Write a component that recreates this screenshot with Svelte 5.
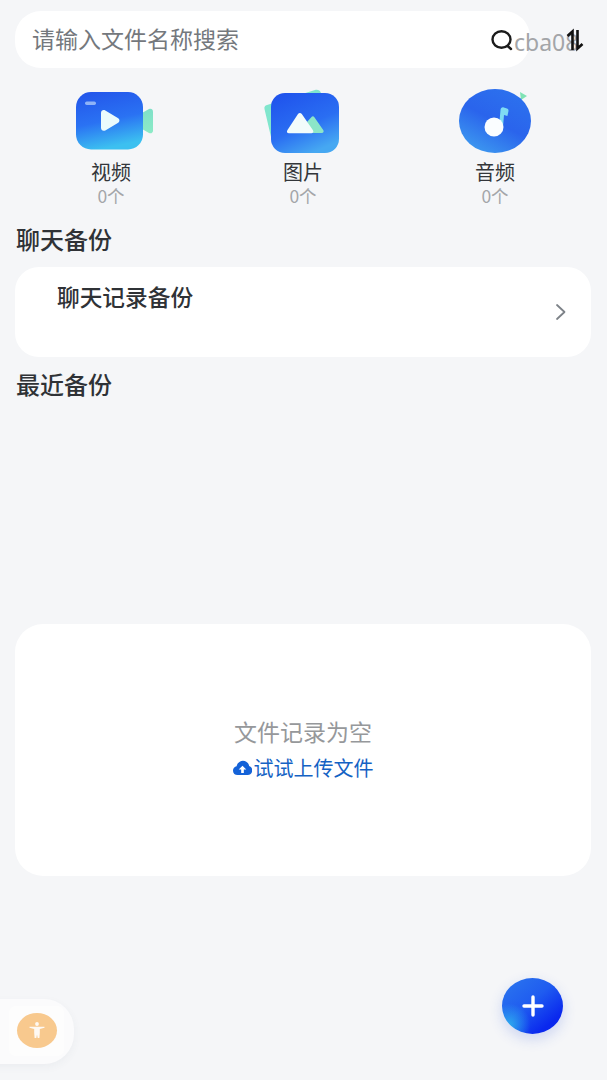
<script>
	const categories = [
		{ key: 'video', label: '视频' },
		{ key: 'image', label: '图片' },
		{ key: 'audio', label: '音频' }
	];
</script>

<div class="page">
	<div class="search-row">
		<div class="search">
			<span class="placeholder">请输入文件名称搜索</span>
		</div>
		<span class="user">cba08</span>
		<svg class="search-icon" width="24" height="24" viewBox="0 0 24 24" fill="none" stroke="#1b1b1b" stroke-width="2.4" stroke-linecap="round">
			<ellipse cx="11.5" cy="10.500" rx="9" ry="8.300" />
			<path d="M17.600 17l3.400 3" />
		</svg>
		<svg class="sort-icon" width="22" height="24" viewBox="0 0 22 24" fill="none" stroke="#111" stroke-width="2.600">
			<path d="M8.500 22V3.500L3.500 8" />
			<path d="M13.500 2v18.500l5-4.500" />
		</svg>
	</div>

	<div class="categories">
		{#each categories as c}
			<div class="category">
				<div class="cat-icon">
					{#if c.key === 'video'}
						<svg width="84" height="68" viewBox="0 0 84 68">
							<defs>
								<linearGradient id="vb" x1="0.1" y1="0" x2="0.35" y2="1">
									<stop offset="0" stop-color="#2355ea" />
									<stop offset="0.55" stop-color="#2a72f3" />
									<stop offset="1" stop-color="#3cc0f0" />
								</linearGradient>
								<linearGradient id="vt" x1="0" y1="0" x2="0" y2="1">
									<stop offset="0" stop-color="#7fe0c8" />
									<stop offset="1" stop-color="#8cebc6" />
								</linearGradient>
							</defs>
							<path d="M73 24l7-4c2-1 4 .2 4 2.500v19c0 2.300-2 3.500-4 2.500l-7-4z" fill="url(#vt)" />
							<rect x="7" y="3" width="67" height="57.500" rx="15" fill="url(#vb)" />
							<rect x="16" y="12.500" width="11" height="3.500" rx="1.700" fill="#8fb3f7" />
							<path d="M32 24c0-2.500 2.200-3.800 4.300-2.600l12.500 7.500c2.200 1.200 2.200 3.800 0 5l-12.500 7.500c-2.100 1.200-4.300-.1-4.300-2.600z" fill="#eafbfc" />
						</svg>
					{:else if c.key === 'image'}
						<svg width="80" height="68" viewBox="0 0 80 68">
							<defs>
								<linearGradient id="ib" x1="0.1" y1="0" x2="0.6" y2="1">
									<stop offset="0" stop-color="#1f52ec" />
									<stop offset="0.6" stop-color="#2a6ef2" />
									<stop offset="1" stop-color="#46a8f2" />
								</linearGradient>
							</defs>
							<path d="M8 48L1.500 20c-.5-2 .5-3.500 2.500-4L52 1c3-.7 5 .5 6 3l4 6H12z" fill="#80e6cd" />
							<rect x="8" y="4" width="68" height="60" rx="14" fill="url(#ib)" />
							<path d="M44 33l4.500-5c.8-.9 2-.9 2.700 0l9 13c1 1.500.3 3-1.500 3H50z" fill="#8ce6c8" />
							<path d="M35 25c1-1.500 2.800-1.500 3.800 0l11 16c1.200 1.700.5 3.300-1.500 3.300H26c-2 0-2.700-1.600-1.500-3.300z" fill="#f2fcfb" />
						</svg>
					{:else}
						<svg width="80" height="68" viewBox="0 0 80 68">
							<defs>
								<linearGradient id="ab" x1="0.8" y1="0" x2="0.2" y2="1">
									<stop offset="0" stop-color="#2c72ee" />
									<stop offset="0.5" stop-color="#2a64ec" />
									<stop offset="1" stop-color="#3e9cf0" />
								</linearGradient>
							</defs>
							<path d="M65 3l7 4-6 4z" fill="#7fe3b5" />
							<ellipse cx="40" cy="32" rx="36" ry="32" fill="url(#ab)" />
							<path d="M44 38l1.500-17c.2-2 1.500-3 3.300-2.500l3.200 1c1.400.5 1.800 1.700 1.400 3l-1 4.500-3.400-1L48 38z" fill="#7fdcf3" />
							<circle cx="39" cy="38" r="9.500" fill="#fafdff" />
						</svg>
					{/if}
				</div>
				<div class="cat-label">{c.label}</div>
				<div class="cat-count">0个</div>
			</div>
		{/each}
	</div>

	<h2 class="title chat-title">聊天备份</h2>
	<div class="chat-card">
		<span class="chat-text">聊天记录备份</span>
		<svg class="chevron" width="12" height="18" viewBox="0 0 12 18" fill="none" stroke="#7d8288" stroke-width="1.800" stroke-linecap="round" stroke-linejoin="round">
			<path d="M2 2l7.500 7L2 16" />
		</svg>
	</div>

	<h2 class="title recent-title">最近备份</h2>

	<div class="empty-card">
		<div class="empty-text">文件记录为空</div>
		<div class="upload">
			<svg width="19" height="16" viewBox="0 0 20 16">
				<path d="M4.800 15.500C2.100 15.500 0 13.400 0 10.800c0-2.300 1.600-4.200 3.800-4.600C4.500 2.700 7.300 0.300 10.500 0.300c3.300 0 6 2.400 6.500 5.600 2 .6 3.300 2.500 3.300 4.700 0 2.700-2.100 4.900-4.800 4.900z" fill="#1462d8" />
				<path d="M10 5.500l4 4.200h-2.600v3.600H8.600V9.700H6z" fill="#fff" />
			</svg>
			<span>试试上传文件</span>
		</div>
	</div>

	<button class="fab" aria-label="add">
		<svg width="22" height="22" viewBox="0 0 22 22" stroke="#fff" stroke-width="3.400" stroke-linecap="round">
			<path d="M11 2v18M2 11h18" />
		</svg>
	</button>

	<div class="a11y">
		<div class="a11y-inner">
			<div class="a11y-dot">
				<svg width="16" height="17" viewBox="0 0 16 17" fill="#fff" opacity="0.9">
					<circle cx="8" cy="2" r="1.900" />
					<path d="M.500 4.700h15v1.100l-4.700 1.300v4l-.4 5H8.700L8 12.500l-.7 3.600H5.600l-.4-5v-4L.500 5.800z" />
				</svg>
			</div>
		</div>
	</div>
</div>

<style>
	:global(body) {
		background: #f5f6f8;
	}

	.page {
		position: relative;
		width: 607px;
		height: 1080px;
		overflow: hidden;
		box-sizing: border-box;
		padding: 11px 16px 0 15px;
		background: #f5f6f8;
		font-family: 'Noto Sans CJK SC', 'Noto Sans', sans-serif;
	}

	.search-row {
		position: relative;
		height: 57px;
	}
	.search {
		width: 515px;
		height: 57px;
		box-sizing: border-box;
		padding: 0 0 3px 17px;
		display: flex;
		align-items: center;
		background: #fff;
		border-radius: 26px;
	}
	.placeholder {
		font-size: 23px;
		color: #74787d;
	}
	.search-icon {
		position: absolute;
		left: 475px;
		top: 18px;
	}
	.user {
		position: absolute;
		left: 499px;
		top: 16px;
		font-family: 'Noto Sans', sans-serif;
		font-size: 23px;
		line-height: 30px;
		color: #a3a5a8;
	}
	.sort-icon {
		position: absolute;
		left: 549px;
		top: 17px;
	}

	.categories {
		display: flex;
		margin-top: 21px;
	}
	.category {
		width: 192px;
		display: flex;
		flex-direction: column;
		align-items: center;
	}
	.cat-icon {
		height: 68px;
		width: 90px;
		display: flex;
		align-items: flex-start;
		justify-content: center;
	}
	.cat-icon svg {
		display: block;
	}
	.cat-label {
		font-size: 20px;
		line-height: 28px;
		margin-top: 1px;
		color: #33363a;
	}
	.cat-count {
		font-size: 17.500px;
		line-height: 20px;
		color: #a4a6a9;
	}

	.title {
		margin: 0;
		font-size: 24px;
		font-weight: 500;
		line-height: 30px;
		color: #2f3236;
	}
	.chat-title {
		margin-top: 18px;
		margin-left: 1px;
	}
	.chat-card {
		position: relative;
		height: 90px;
		margin-top: 13px;
		box-sizing: border-box;
		padding: 14px 0 0 42px;
		background: #fff;
		border-radius: 24px;
	}
	.chat-text {
		font-size: 22.700px;
		font-weight: 500;
		line-height: 32px;
		color: #2f3236;
	}
	.chevron {
		position: absolute;
		left: 540px;
		top: 36px;
	}
	.recent-title {
		margin-top: 12px;
		margin-left: 1px;
	}

	.empty-card {
		height: 252px;
		margin-top: 225px;
		box-sizing: border-box;
		padding-top: 90px;
		display: flex;
		flex-direction: column;
		align-items: center;
		background: #fff;
		border-radius: 28px;
	}
	.empty-text {
		font-size: 23px;
		line-height: 34px;
		color: #96989b;
	}
	.upload {
		display: flex;
		align-items: center;
		gap: 2px;
		margin-top: 3px;
		font-size: 20px;
		line-height: 34px;
		color: #1462c4;
	}

	.fab {
		position: absolute;
		left: 502px;
		top: 978px;
		width: 61px;
		height: 56px;
		padding: 0;
		border: none;
		border-radius: 50%;
		display: flex;
		align-items: center;
		justify-content: center;
		background:
			radial-gradient(circle at 12% 84%, rgba(50, 190, 238, 0.8) 0, rgba(50, 190, 238, 0) 30%),
			linear-gradient(140deg, #2c78ee 0%, #1f5cf0 45%, #0a28ee 80%);
		box-shadow: 0 5px 14px rgba(40, 80, 220, 0.2);
	}

	.a11y {
		position: absolute;
		left: -20px;
		top: 999px;
		width: 94px;
		height: 65px;
		border-radius: 0 30px 30px 0;
		background: #fbfbfc;
		box-shadow: 0 3px 8px rgba(60, 70, 90, 0.05);
		display: flex;
		align-items: center;
		justify-content: flex-end;
		padding: 0 10px 2px 0;
		box-sizing: border-box;
	}
	.a11y-inner {
		width: 55px;
		height: 50px;
		display: flex;
		align-items: center;
		justify-content: center;
		background: #fdfdfd;
		border-radius: 6px;
	}
	.a11y-dot {
		width: 40px;
		height: 35px;
		border-radius: 50%;
		background: #f8c98e;
		display: flex;
		align-items: center;
		justify-content: center;
	}
</style>
